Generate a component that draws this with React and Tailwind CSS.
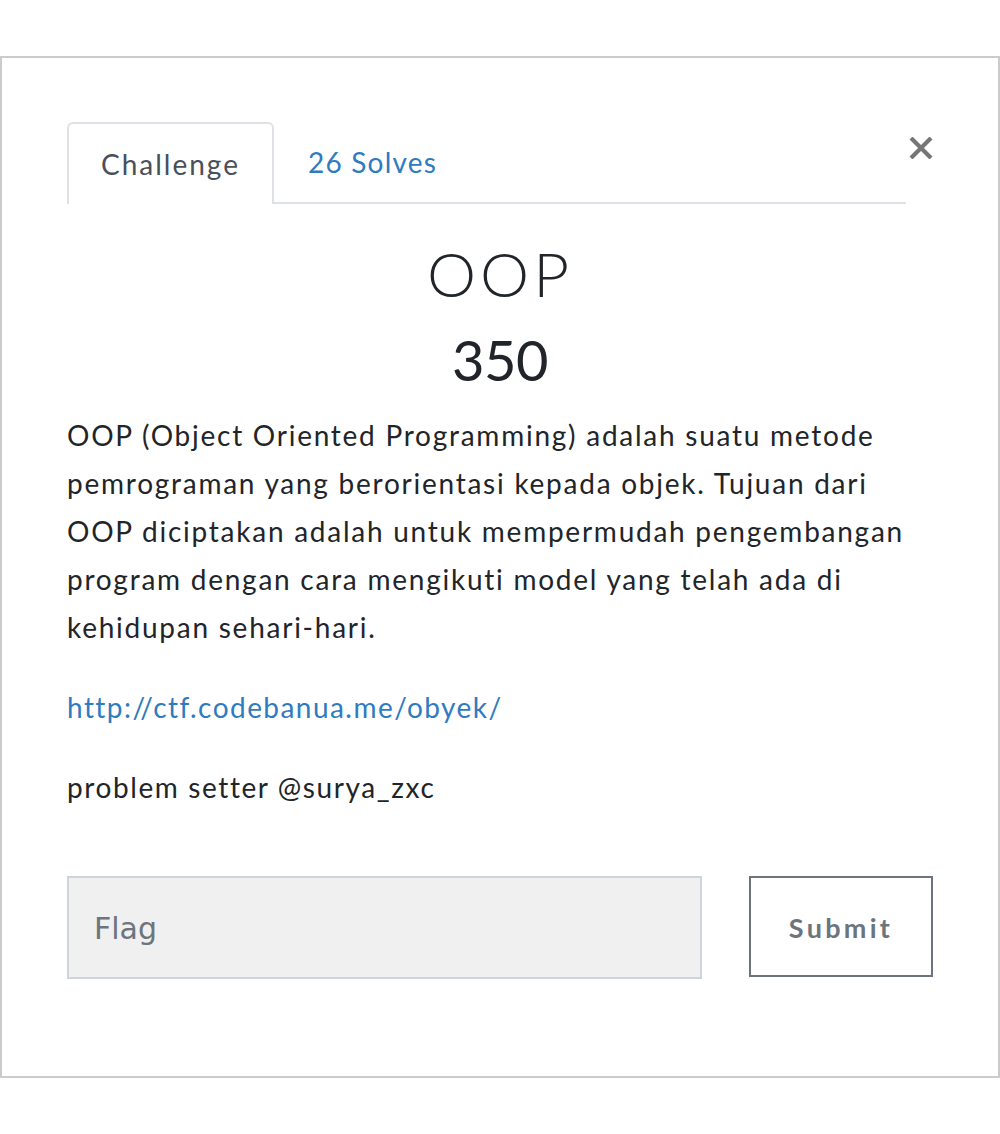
export default function App() {
  return (
    <div className="min-h-[1134px] bg-white pt-[56px]" style={{ fontFamily: 'Lato, "Liberation Sans", sans-serif' }}>
      {/* Modal box */}
      <div className="h-[1022px] border-2 border-[#cbcbcb] px-[65px] pt-[64px]">
        {/* Tabs + close */}
        <div className="flex items-start">
          <ul className="flex flex-1 border-b-2 border-[#dee2e6]">
            <li className="-mb-[2px] rounded-t-[6px] border-2 border-b-0 border-[#dee2e6] bg-white px-[32px] py-[19px] text-[28px] leading-[42px] tracking-[2px] text-[#495057]">
              Challenge
            </li>
            <li className="px-[34px] py-[19px] text-[28px] leading-[42px] tracking-[1.2px] text-[#2f7bbf]">
              26 Solves
            </li>
          </ul>
          <button className="ml-[2px] mt-[15px] flex h-[22px] w-[25px] items-center justify-center">
            <svg width="24" height="22" viewBox="0 0 24 22">
              <path d="M2 1 L22 21 M22 1 L2 21" stroke="#767676" strokeWidth="4.2" />
            </svg>
          </button>
        </div>

        {/* Title */}
        <h1 className="mt-[32px] text-center text-[62px] font-light leading-[1.2] tracking-[4px] text-[#212529]">OOP</h1>
        <h2 className="mt-[16px] text-center text-[56px] leading-[1.2] tracking-[-0.5px] text-[#212529]">350</h2>

        {/* Description */}
        <div className="mt-[17px] text-[28px] leading-[48px] tracking-[1.75px] text-[#212529]">
          <p className="mb-[32px]">
            OOP (Object Oriented Programming) adalah suatu metode pemrograman yang berorientasi kepada objek. Tujuan dari OOP diciptakan adalah untuk mempermudah pengembangan program dengan cara mengikuti model yang telah ada di kehidupan sehari-hari.
          </p>
          <p className="mb-[32px] tracking-[1.45px]">
            <a className="text-[#2f7bbf]">http://ctf.codebanua.me/obyek/</a>
          </p>
          <p className="tracking-[1.6px]">problem setter @surya_zxc</p>
        </div>

        {/* Flag form */}
        <div className="mt-[65px] flex items-start gap-[47px]">
          <div className="flex h-[103px] w-[635px] items-center border-2 border-[#ced4da] bg-[#f0f0f0] pl-[25px] pt-[2px]">
            <span className="text-[30px] text-[#6c757d]" style={{ fontFamily: '"DejaVu Sans", sans-serif' }}>Flag</span>
          </div>
          <button className="flex h-[101px] flex-1 items-center justify-center border-2 border-[#6c757d] pt-[5px] text-[27px] font-bold tracking-[3.3px] text-[#6c757d]">
            Submit
          </button>
        </div>
      </div>
    </div>
  );
}
